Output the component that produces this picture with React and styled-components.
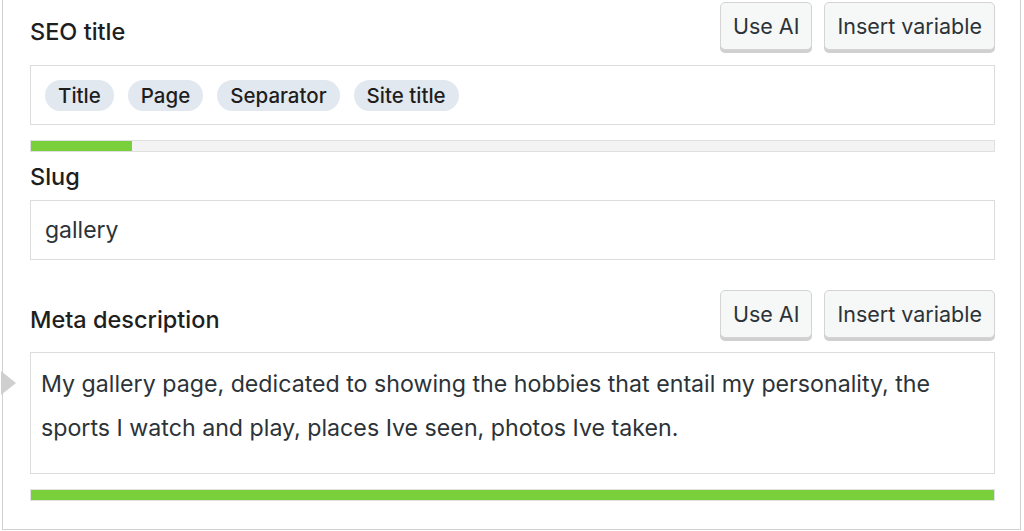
import React from "react";
import styled, { createGlobalStyle } from "styled-components";

const Global = createGlobalStyle`
  html, body { margin: 0; padding: 0; background: #fff; }
  body { font-family: Inter, "Noto Sans", "Liberation Sans", sans-serif; }
`;

const Panel = styled.div`
  box-sizing: border-box;
  width: 1019px;
  height: 530px;
  margin-left: 2px;
  border: 1px solid #d2d2d2;
  border-top: none;
  background: #fff;
  padding: 2px 25px 0 27px;
  display: flex;
  flex-direction: column;
`;

const Header = styled.div`
  display: flex;
  align-items: center;
  justify-content: space-between;
  height: 50px;
  margin-top: ${(p) => p.$mt || 0}px;
  margin-bottom: ${(p) => p.$gap}px;
`;

const Label = styled.div`
  font-size: 23.5px;
  font-weight: 500;
  color: #1e1e1e;
  padding-top: ${(p) => p.$top || 0}px;
`;

const Buttons = styled.div`
  display: flex;
  gap: 12px;
  align-self: flex-start;
`;

const Button = styled.button`
  box-sizing: border-box;
  height: 48px;
  padding: 0 12px;
  font-family: inherit;
  font-size: 21.5px;
  color: #2c3338;
  background: #f6f7f7;
  border: 1px solid #d4d4d4;
  border-radius: 5px;
  box-shadow: 0 3px 0 #d0d0d0;
  cursor: pointer;
`;

const Field = styled.div`
  position: relative;
  box-sizing: border-box;
  height: ${(p) => p.$h}px;
  border: 1px solid #dcdcdc;
  background: #fff;
  display: flex;
  align-items: ${(p) => (p.$top ? "flex-start" : "center")};
  gap: 14px;
  padding: ${(p) => p.$pad};
  font-size: ${(p) => p.$fs || 23}px;
  color: #2c3338;
`;

const Pill = styled.span`
  display: inline-flex;
  align-items: center;
  height: 31px;
  padding: 0 13px;
  border-radius: 16px;
  background: #e2e8f0;
  color: #1e1e1e;
  font-size: 20.5px;
  font-weight: 500;
`;

const Text = styled.div`
  line-height: 44px;
  color: #2c3338;
`;

const Arrow = styled.span`
  position: absolute;
  left: -30px;
  top: 18px;
  width: 0;
  height: 0;
  border-top: 12px solid transparent;
  border-bottom: 12px solid transparent;
  border-left: 15px solid #cfcfcf;
`;

const Progress = styled.div`
  box-sizing: border-box;
  height: 12px;
  margin-top: ${(p) => p.$mt}px;
  border: 1px solid #e0e0e0;
  background: #f3f3f3;
  overflow: hidden;
`;

const Fill = styled.div`
  height: 100%;
  background: #7ad03a;
`;

const SlugLabel = styled.div`
  height: 48px;
  display: flex;
  align-items: center;
  font-size: 23.5px;
  font-weight: 500;
  color: #1e1e1e;
`;

function Score({ pct, mt }) {
  return (
    <Progress $mt={mt}>
      <Fill style={{ width: `${pct}%` }} />
    </Progress>
  );
}

function FieldHeader({ label, mt, gap }) {
  return (
    <Header $mt={mt} $gap={gap}>
      <Label $top={8}>{label}</Label>
      <Buttons>
        <Button>Use AI</Button>
        <Button>Insert variable</Button>
      </Buttons>
    </Header>
  );
}

export default function App() {
  return (
    <>
      <Global />
      <Panel>
        <FieldHeader label="SEO title" gap={13} />
        <Field $h={60} $pad="0 14px">
          <Pill>Title</Pill>
          <Pill>Page</Pill>
          <Pill>Separator</Pill>
          <Pill>Site title</Pill>
        </Field>
        <Score pct={10.5} mt={15} />
        <SlugLabel>Slug</SlugLabel>
        <Field $h={60} $pad="0 14px">gallery</Field>
        <FieldHeader label="Meta description" mt={30} gap={12} />
        <Field $h={122} $pad="9px 10px" $top $fs={23.2}>
          <Arrow />
          <Text>
            My gallery page, dedicated to showing the hobbies that entail my personality, the sports I watch and play, places Ive seen, photos Ive taken.
          </Text>
        </Field>
        <Score pct={100} mt={15} />
      </Panel>
    </>
  );
}
